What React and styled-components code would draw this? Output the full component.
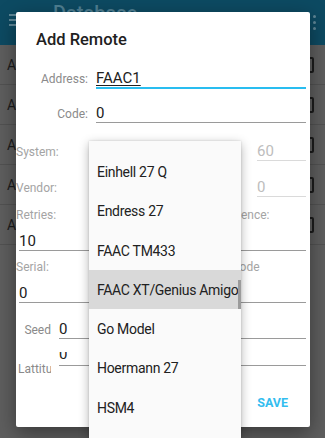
import React from "react";
import styled, { createGlobalStyle } from "styled-components";

const GlobalStyle = createGlobalStyle`
  html, body {
    margin: 0;
    padding: 0;
    background: #5e5e5e;
  }
  body {
    font-family: Roboto, "Noto Sans", sans-serif;
  }
  * {
    box-sizing: border-box;
  }
`;

const Screen = styled.div`
  position: relative;
  width: 325px;
  height: 438px;
  overflow: hidden;
  background: #5e5e5e;
`;

const AppBar = styled.header`
  height: 45px;
  display: flex;
  align-items: flex-start;
  padding: 0 9px;
  background: #0d4a62;
`;

const MenuIcon = styled.svg`
  margin-top: 14px;
  flex: none;
`;

const AppTitle = styled.h1`
  margin: 1px 0 0 36px;
  font-size: 20px;
  font-weight: 500;
  line-height: 24px;
  color: #4f7f92;
`;

const Overflow = styled.svg`
  margin: 15px 0 0 auto;
  flex: none;
`;

const ListRow = styled.div`
  height: 40px;
  display: flex;
  align-items: center;
  justify-content: space-between;
  padding: 0 11px 0 7px;
  border-bottom: 1px solid #525252;
`;

const RowText = styled.span`
  font-size: 14px;
  color: #1c1c1c;
`;

const Checkbox = styled.span`
  width: 16px;
  height: 16px;
  border: 2px solid #1c1c1c;
  border-radius: 2px;
`;

const Dialog = styled.div`
  position: absolute;
  left: 16px;
  top: 12px;
  width: 294px;
  height: 415px;
  display: flex;
  flex-direction: column;
  background: #ffffff;
  border-radius: 2px;
  box-shadow: 0 6px 20px rgba(0, 0, 0, 0.4);
  overflow: hidden;
`;

const DialogTitle = styled.h2`
  margin: 16px 0 0 20px;
  font-size: 16.5px;
  font-weight: 500;
  line-height: 24px;
  color: #212121;
`;

const Form = styled.div`
  display: flex;
  flex-direction: column;
  padding-right: 4px;
`;

const FieldRow = styled.div`
  display: grid;
  grid-template-columns: ${(p) => p.$cols};
  column-gap: ${(p) => p.$gap || 0}px;
  align-items: ${(p) => p.$align || "baseline"};
  margin-top: ${(p) => p.$top || 0}px;
  padding-left: ${(p) => p.$inset || 0}px;
`;

const Label = styled.label`
  display: block;
  font-size: 12px;
  line-height: 16px;
  color: ${(p) => (p.$light ? "#a4a4a4" : "#8a8a8a")};
  text-align: ${(p) => p.$align || "left"};
  white-space: nowrap;
  overflow: clip;
  margin-top: ${(p) => p.$top || 0}px;
  padding-left: ${(p) => p.$indent || 0}px;
`;

const Field = styled.div`
  height: ${(p) => p.$height || 20}px;
  font-size: 15px;
  line-height: ${(p) => p.$line || 20}px;
  color: ${(p) => (p.$disabled ? "#bdbdbd" : "#212121")};
  border-bottom: 1px solid
    ${(p) => (p.$focused ? "#29bdf0" : p.$disabled ? "#dadada" : "#9a9a9a")};
  box-shadow: ${(p) => (p.$focused ? "0 1px 0 #29bdf0" : "none")};
  margin-top: ${(p) => p.$top || 0}px;
  margin-left: ${(p) => p.$indent || 0}px;
  overflow: hidden;
  white-space: nowrap;
`;

const FocusedText = styled.span`
  text-decoration: underline;
  text-decoration-thickness: 1px;
  text-underline-offset: 2px;
`;

const TwoColumns = styled.div`
  display: grid;
  grid-template-columns: 182px 1fr;
  column-gap: 16px;
  margin-top: 10px;
`;

const Actions = styled.div`
  margin-top: auto;
  display: flex;
  justify-content: flex-end;
  padding: 0 14px 8px 0;
`;

const TextButton = styled.button`
  padding: 8px;
  border: 0;
  background: transparent;
  font-family: Roboto, "Noto Sans", sans-serif;
  font-size: 12.5px;
  font-weight: 700;
  line-height: 16px;
  color: #33bdef;
`;

const Menu = styled.div`
  position: absolute;
  left: 89px;
  top: 141px;
  width: 152px;
  height: 297px;
  background: #fafafa;
  box-shadow: 0 3px 10px rgba(0, 0, 0, 0.3), 0 0 2px rgba(0, 0, 0, 0.15);
  overflow: hidden;
`;

const MenuList = styled.ul`
  list-style: none;
  margin: -28px 0 0;
  padding: 0;
`;

const MenuItem = styled.li`
  height: 39.3px;
  display: flex;
  align-items: center;
  padding-left: 8px;
  font-size: 14px;
  letter-spacing: -0.3px;
  color: #212121;
  white-space: nowrap;
  background: ${(p) => (p.$active ? "#d9d9d9" : "transparent")};
`;

const ScrollThumb = styled.div`
  position: absolute;
  right: 0;
  top: 139px;
  width: 3px;
  height: 29px;
  background: #9b9b9b;
`;

const vendors = [
  "Doorhan",
  "Einhell 27 Q",
  "Endress 27",
  "FAAC TM433",
  "FAAC XT/Genius Amigo",
  "Go Model",
  "Hoermann 27",
  "HSM4",
  "Hoermann 40",
];

export default function App() {
  return (
    <Screen>
      <GlobalStyle />
      <AppBar>
        <MenuIcon width="8" height="12" viewBox="0 0 8 12">
          <rect x="0" y="0" width="8" height="2" fill="#5f8797" />
          <rect x="0" y="5" width="8" height="2" fill="#5f8797" />
          <rect x="0" y="10" width="8" height="2" fill="#5f8797" />
        </MenuIcon>
        <AppTitle>Database</AppTitle>
        <Overflow width="3" height="15" viewBox="0 0 3 15">
          <circle cx="1.5" cy="1.5" r="1.5" fill="#5f8797" />
          <circle cx="1.5" cy="7.5" r="1.5" fill="#5f8797" />
          <circle cx="1.5" cy="13.5" r="1.5" fill="#5f8797" />
        </Overflow>
      </AppBar>
      {[0, 1, 2, 3, 4].map((i) => (
        <ListRow key={i}>
          <RowText>A</RowText>
          <Checkbox />
        </ListRow>
      ))}

      <Dialog>
        <DialogTitle>Add Remote</DialogTitle>
        <Form>
          <FieldRow $cols="72px 1fr" $gap={8} $top={16}>
            <Label $align="right">Address:</Label>
            <Field $focused>
              <FocusedText>FAAC1</FocusedText>
            </Field>
          </FieldRow>
          <FieldRow $cols="72px 1fr" $gap={8} $top={15}>
            <Label $align="right">Code:</Label>
            <Field>0</Field>
          </FieldRow>
          <FieldRow $cols="1fr 49px" $top={18}>
            <Label $light>System:</Label>
            <Field $disabled>60</Field>
          </FieldRow>
          <FieldRow $cols="1fr 49px" $top={16}>
            <Label $light>Vendor:</Label>
            <Field $disabled>0</Field>
          </FieldRow>
          <TwoColumns>
            <Label $light>Retries:</Label>
            <Label $light>Sequence:</Label>
            <Field $top={8} $indent={3}>10</Field>
            <Field $top={8} />
            <Label $light $top={8}>Serial:</Label>
            <Label $light $top={8}>Keycode</Label>
            <Field $top={8} $indent={3}>0</Field>
            <Field $top={8} />
          </TwoColumns>
          <FieldRow $cols="33px 1fr" $gap={8} $inset={2} $top={16}>
            <Label $align="right">Seed</Label>
            <Field>0</Field>
          </FieldRow>
          <FieldRow $cols="33px 1fr" $gap={8} $inset={2} $top={13} $align="start">
            <Label $align="right" $top={9}>Lattitude:</Label>
            <Field $height={14} $line={5}>0</Field>
          </FieldRow>
        </Form>
        <Actions>
          <TextButton>SAVE</TextButton>
        </Actions>
      </Dialog>

      <Menu>
        <MenuList>
          {vendors.map((v) => (
            <MenuItem key={v} $active={v === "FAAC XT/Genius Amigo"}>
              {v}
            </MenuItem>
          ))}
        </MenuList>
        <ScrollThumb />
      </Menu>
    </Screen>
  );
}
